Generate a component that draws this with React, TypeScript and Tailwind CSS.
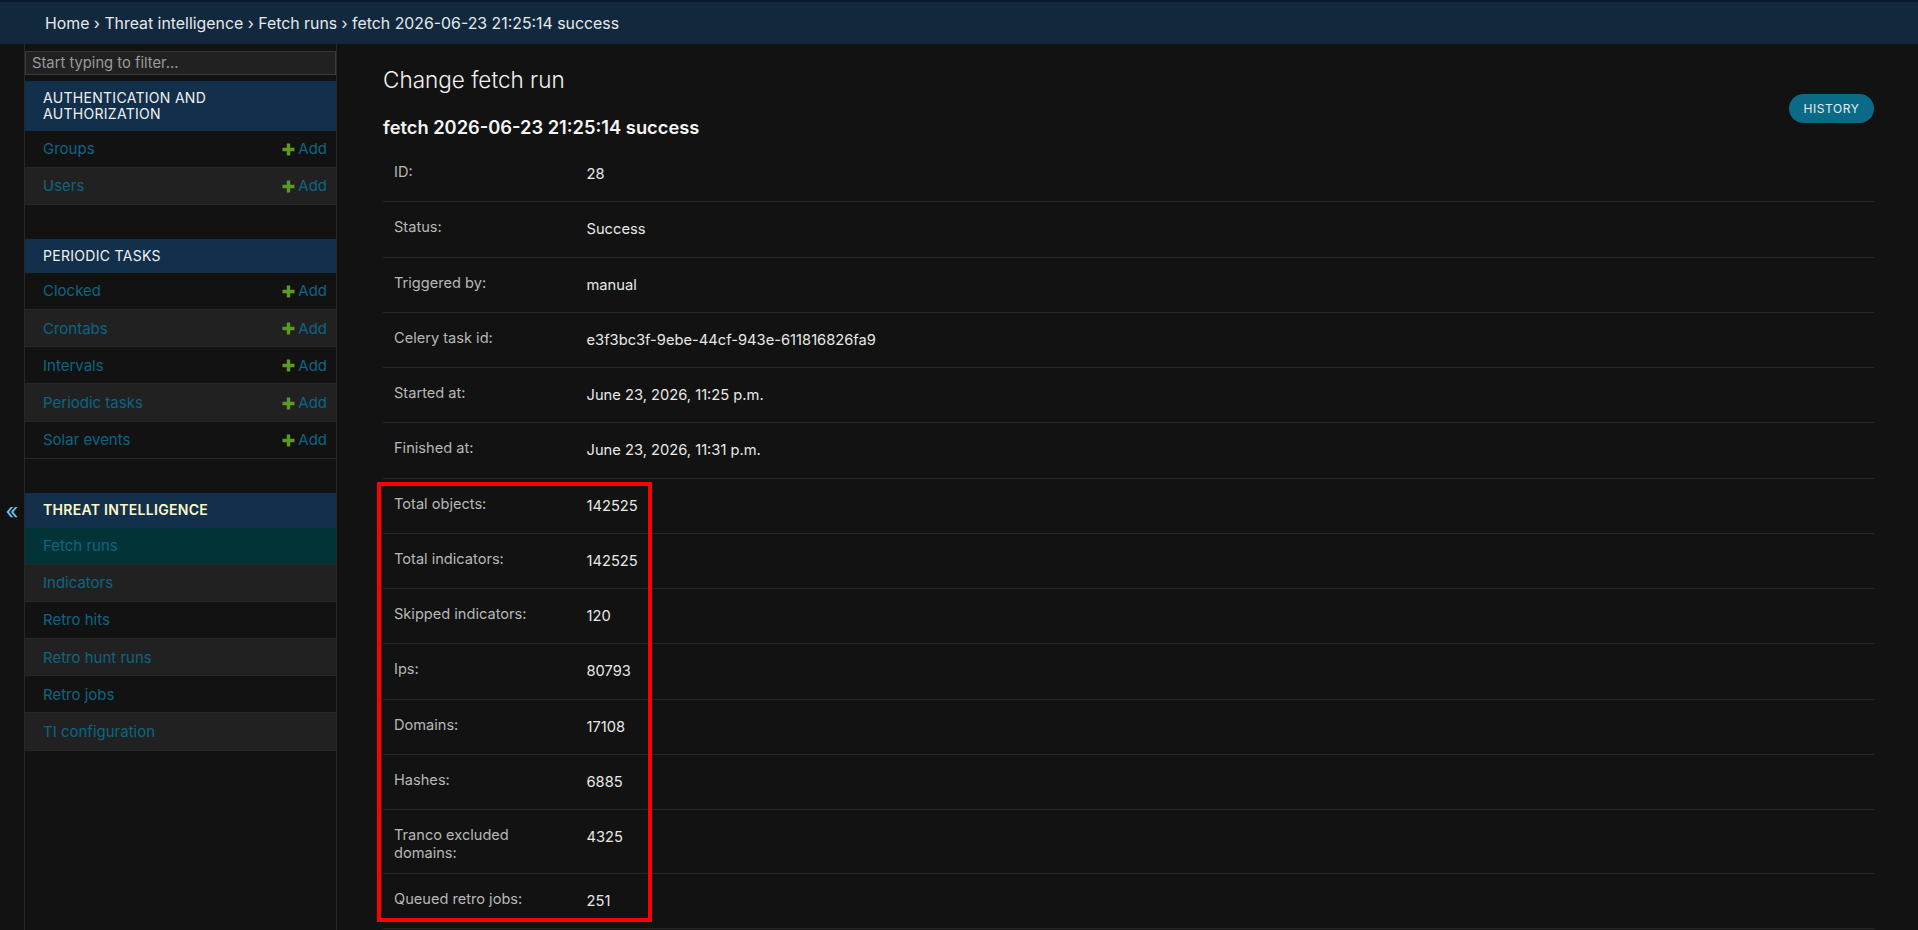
const AUTH = [{ name: "Groups" }, { name: "Users" }];
const PERIODIC = ["Clocked", "Crontabs", "Intervals", "Periodic tasks", "Solar events"];
const THREAT = ["Fetch runs", "Indicators", "Retro hits", "Retro hunt runs", "Retro jobs", "TI configuration"];

const FIELDS: { label: string; value: string; tall?: boolean }[] = [
  { label: "ID:", value: "28" },
  { label: "Status:", value: "Success" },
  { label: "Triggered by:", value: "manual" },
  { label: "Celery task id:", value: "e3f3bc3f-9ebe-44cf-943e-611816826fa9" },
  { label: "Started at:", value: "June 23, 2026, 11:25 p.m." },
  { label: "Finished at:", value: "June 23, 2026, 11:31 p.m." },
  { label: "Total objects:", value: "142525" },
  { label: "Total indicators:", value: "142525" },
  { label: "Skipped indicators:", value: "120" },
  { label: "Ips:", value: "80793" },
  { label: "Domains:", value: "17108" },
  { label: "Hashes:", value: "6885" },
  { label: "Tranco excluded domains:", value: "4325", tall: true },
  { label: "Queued retro jobs:", value: "251" },
];

function AddLink() {
  return (
    <span className="flex items-center text-[15px] text-[#0b6584]">
      <svg width="13" height="13" viewBox="0 0 13 13" className="mr-[3px]">
        <path d="M4.8 0.5h3.4v4.3h4.3v3.4H8.2v4.3H4.8V8.2H0.5V4.8h4.3z" fill="#5c9a24" />
      </svg>
      Add
    </span>
  );
}

function ModelRow({ name, even, add, current }: { name: string; even: boolean; add?: boolean; current?: boolean }) {
  return (
    <div
      className={`flex h-[37.1px] items-center justify-between border-b border-[#272727] pl-[18px] pr-[9px] pt-[1px] text-[15px] text-[#0b6584] ${
        current ? "bg-[#023337]" : even ? "bg-[#212121]" : "bg-[#121212]"
      }`}
    >
      <span>{name}</span>
      {add && <AddLink />}
    </div>
  );
}

function Caption({ children, active }: { children: React.ReactNode; active?: boolean }) {
  return (
    <div
      className={`bg-[#12304c] px-[18px] pt-[9px] text-[14px] leading-[16px] tracking-[0.3px] ${
        active ? "pb-[10px] font-semibold text-[#fdf8c4]" : "pb-[9px] text-[#f0f0f0]"
      }`}
    >
      {children}
    </div>
  );
}

export default function App() {
  return (
    <div className="flex h-screen flex-col overflow-hidden bg-[#121212] font-['Inter',sans-serif] text-[#e8e8e8]">
      <div className="h-[44px] shrink-0 border-t-2 border-[#0a1a2e] bg-[#11283d] pl-[45px] text-[15.85px] leading-[43px] text-[#e4e8ec]">
        Home › Threat intelligence › Fetch runs › fetch 2026-06-23 21:25:14 success
      </div>

      <div className="flex min-h-0 flex-1">
        <div className="flex w-[25px] shrink-0 items-center justify-center border-r border-[#272727] pt-[47px]">
          <span className="text-[22px] leading-none text-[#6ec1ea]">«</span>
        </div>

        <nav className="w-[312px] shrink-0 border-r border-[#272727]">
          <div className="mb-[6px] mt-[7px]">
            <input
              placeholder="Start typing to filter..."
              className="block h-[24px] w-full border border-[#3a3a3a] bg-[#212121] px-[6px] text-[14.75px] text-[#e8e8e8] outline-none placeholder:text-[#9a9a9a]"
            />
          </div>

          <Caption>
            AUTHENTICATION AND
            <br />
            AUTHORIZATION
          </Caption>
          {AUTH.map((m, i) => (
            <ModelRow key={m.name} name={m.name} even={i % 2 === 1} add />
          ))}

          <div className="h-[34px]" />
          <Caption>PERIODIC TASKS</Caption>
          {PERIODIC.map((m, i) => (
            <ModelRow key={m} name={m} even={i % 2 === 1} add />
          ))}

          <div className="h-[34.3px]" />
          <Caption active>THREAT INTELLIGENCE</Caption>
          {THREAT.map((m, i) => (
            <ModelRow key={m} name={m} even={i % 2 === 1} current={i === 0} />
          ))}
        </nav>

        <main className="min-w-0 flex-1 pl-[46px] pr-[44px] pt-[22px]">
          <div className="relative">
            <h1 className="text-[22.5px] font-light leading-[28px] text-[#f2f2f2]">Change fetch run</h1>
            <button className="absolute right-0 top-[28px] h-[29px] w-[85px] rounded-[15px] bg-[#0b6a87] text-[12px] tracking-[0.6px] text-[#e8eef2]">
              HISTORY
            </button>
            <h2 className="mt-[21px] text-[18.3px] font-semibold leading-[24px] text-[#f5f5f5]">
              fetch 2026-06-23 21:25:14 success
            </h2>

            <div className="mt-[8px]">
              {FIELDS.map((f) => (
                <div key={f.label} className={`flex border-b border-[#272727] ${f.tall ? "h-[64px]" : "h-[55.25px]"}`}>
                  <div className="w-[203.5px] shrink-0 pl-[11px] pr-[18px] pt-[16px] text-[14.6px] leading-[18px] text-[#b8b8b8]">
                    {f.label}
                  </div>
                  <div className="pt-[18px] text-[14.7px] leading-[18px] text-[#e8e8e8]">{f.value}</div>
                </div>
              ))}
            </div>

            {/* annotation box drawn over the screenshot */}
            <div className="pointer-events-none absolute left-[-6px] top-[416px] h-[440px] w-[275px] border-[4px] border-[#ff0000]" />
          </div>
        </main>
      </div>
    </div>
  );
}
